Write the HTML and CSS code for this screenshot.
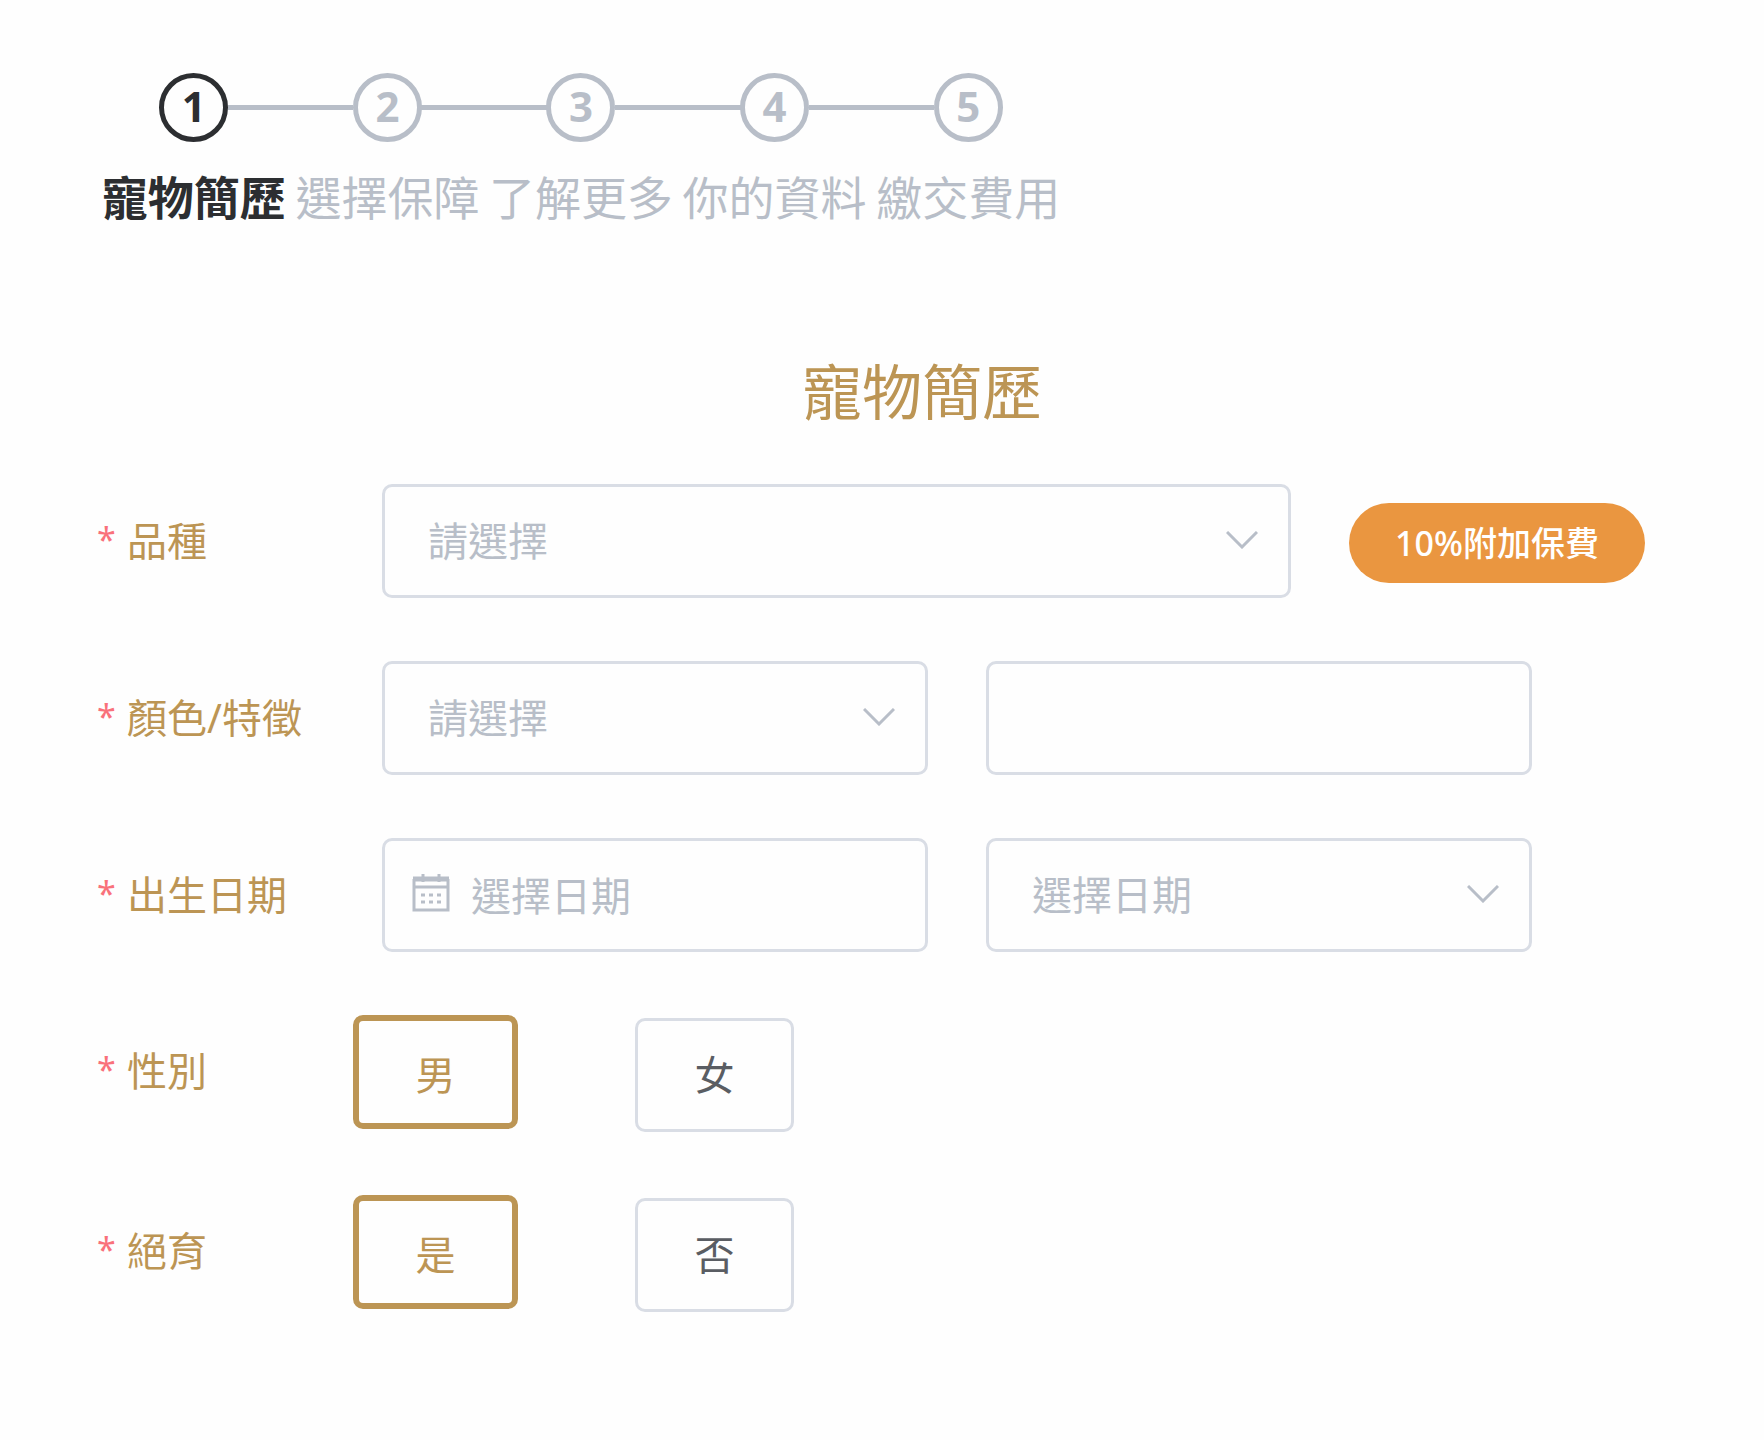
FILE: index.html
```html
<!DOCTYPE html>
<html lang="zh-Hant">
<head>
<meta charset="utf-8">
<meta name="viewport" content="width=device-width, initial-scale=1">
<title>寵物簡歷</title>
<link rel="stylesheet" href="styles.css">
</head>
<body>
<main class="page">
  <ol class="steps">
    <li class="step step-active" aria-current="step"><span class="step-number">1</span><span class="step-name">寵物簡歷</span></li>
    <li class="step"><span class="step-number">2</span><span class="step-name">選擇保障</span></li>
    <li class="step"><span class="step-number">3</span><span class="step-name">了解更多</span></li>
    <li class="step"><span class="step-number">4</span><span class="step-name">你的資料</span></li>
    <li class="step"><span class="step-number">5</span><span class="step-name">繳交費用</span></li>
  </ol>

  <h1 class="title">寵物簡歷</h1>

  <form class="form">
    <div class="row">
      <label class="label" for="breed">品種</label>
      <div class="controls">
        <div class="field field-wide">
          <select class="control" id="breed"><option>請選擇</option></select>
          <svg class="chevron" viewBox="0 0 32 18" aria-hidden="true"><path d="M1 1l15 15L31 1"/></svg>
        </div>
        <span class="badge">10%附加保費</span>
      </div>
    </div>

    <div class="row">
      <label class="label" for="color">顏色/特徵</label>
      <div class="controls">
        <div class="field">
          <select class="control" id="color"><option>請選擇</option></select>
          <svg class="chevron" viewBox="0 0 32 18" aria-hidden="true"><path d="M1 1l15 15L31 1"/></svg>
        </div>
        <div class="field">
          <input class="control" type="text" aria-label="特徵">
        </div>
      </div>
    </div>

    <div class="row">
      <label class="label" for="birthday">出生日期</label>
      <div class="controls">
        <div class="field">
          <svg class="calendar" viewBox="0 0 38 38" aria-hidden="true">
            <path class="calendar-bar" d="M1 5h36"/>
            <path d="M2 5v31h34V5M2 13h34M11 0v8M27 0v8"/>
            <path class="calendar-days" d="M9 21h20M9 28h20"/>
          </svg>
          <input class="control control-date" id="birthday" type="text" placeholder="選擇日期">
        </div>
        <div class="field">
          <select class="control" aria-label="選擇日期"><option>選擇日期</option></select>
          <svg class="chevron" viewBox="0 0 32 18" aria-hidden="true"><path d="M1 1l15 15L31 1"/></svg>
        </div>
      </div>
    </div>

    <div class="row row-choice" role="radiogroup" aria-labelledby="sex">
      <span class="label" id="sex">性別</span>
      <div class="choices">
        <label class="choice"><input class="choice-input" type="radio" name="sex" checked>男</label>
        <label class="choice"><input class="choice-input" type="radio" name="sex">女</label>
      </div>
    </div>

    <div class="row row-choice" role="radiogroup" aria-labelledby="neutered">
      <span class="label" id="neutered">絕育</span>
      <div class="choices">
        <label class="choice"><input class="choice-input" type="radio" name="neutered" checked>是</label>
        <label class="choice"><input class="choice-input" type="radio" name="neutered">否</label>
      </div>
    </div>
  </form>
</main>
</body>
</html>
```

FILE: styles.css
```css
:root {
  --gold: #bc9554;
  --muted: #b8bec8;
  --line: #d9dde5;
  --ink: #2c2e31;
}

* {
  box-sizing: border-box;
}

body {
  margin: 0;
  background: #fefefe;
  color: var(--ink);
  font-family: "Noto Sans", "Noto Sans CJK TC", sans-serif;
  font-size: 40px;
  line-height: 60px;
}

.page {
  padding: 73px 17px 128px 97px;
}

/* Progress steps */
.steps {
  display: grid;
  grid-template-columns: repeat(5, 1fr);
  max-width: 968px;
  margin: 0;
  padding: 0;
  list-style: none;
}

.step {
  position: relative;
  display: flex;
  flex-direction: column;
  align-items: center;
  gap: 20px;
  color: var(--muted);
}

.step-active {
  color: var(--ink);
  font-weight: 700;
}

.step-number {
  display: flex;
  align-items: center;
  justify-content: center;
  width: 69px;
  height: 69px;
  padding-bottom: 4px;
  border: 5px solid currentColor;
  border-radius: 50%;
  font-size: 42px;
  font-weight: 700;
}

.step-name {
  font-size: 46px;
  line-height: 70px;
  white-space: nowrap;
}

/* Connector between two neighbouring circles */
.step:not(:last-child)::after {
  content: "";
  position: absolute;
  top: 32px;
  left: calc(50% + 34px);
  width: calc(100% - 68px);
  height: 5px;
  background: var(--muted);
}

.title {
  margin: 115px 0 47px;
  color: var(--gold);
  font-size: 60px;
  font-weight: 400;
  line-height: 90px;
  text-align: center;
}

/* Form */
.form {
  display: flex;
  flex-direction: column;
  gap: 63px;
}

.row {
  display: grid;
  grid-template-columns: 285px 1fr;
  align-items: center;
}

.row-choice {
  grid-template-columns: 256px 1fr;
}

.row-choice .label {
  padding-bottom: 6px;
}

.label {
  display: flex;
  color: var(--gold);
}

.label::before {
  content: "*";
  flex: 0 0 30px;
  color: #f9717b;
  font-size: 34px;
  line-height: 56px;
}

.controls {
  display: flex;
  align-items: center;
  gap: 58px;
}

.field {
  position: relative;
  flex: 0 0 40%;
}

.field-wide {
  flex-basis: 66.6%;
}

.control {
  display: block;
  width: 100%;
  height: 114px;
  padding: 0 43px;
  border: 3px solid var(--line);
  border-radius: 10px;
  background: transparent;
  color: var(--muted);
  font: inherit;
  appearance: none;
}

.control::placeholder {
  color: var(--muted);
  opacity: 1;
}

.control-date {
  padding-left: 86px;
}

.chevron,
.calendar {
  position: absolute;
  fill: none;
  stroke: var(--muted);
  pointer-events: none;
}

.chevron {
  top: 47px;
  right: 33px;
  width: 32px;
  height: 18px;
  stroke-width: 3;
}

.calendar {
  top: 36px;
  left: 30px;
  width: 38px;
  height: 38px;
  stroke-width: 3;
}

.calendar-bar {
  stroke-width: 5;
}

.calendar-days {
  stroke-dasharray: 4 4;
}

.badge {
  margin-top: 4px;
  padding: 10px 46px;
  border-radius: 40px;
  background: #ea9640;
  color: #fff;
  font-size: 34px;
  font-weight: 500;
  white-space: nowrap;
}

.choices {
  display: flex;
  align-items: flex-end;
  gap: 117px;
  height: 117px;
}

.choice {
  position: relative;
  display: flex;
  align-items: center;
  justify-content: center;
  width: 159px;
  height: 114px;
  border: 3px solid var(--line);
  border-radius: 10px;
  color: #5a5d63;
}

.choice:has(.choice-input:checked) {
  align-self: flex-start;
  width: 165px;
  padding-top: 6px;
  border: 6px solid var(--gold);
  color: var(--gold);
}

.choice-input {
  position: absolute;
  inset: 0;
  width: 100%;
  height: 100%;
  margin: 0;
  opacity: 0;
  cursor: pointer;
}
```
